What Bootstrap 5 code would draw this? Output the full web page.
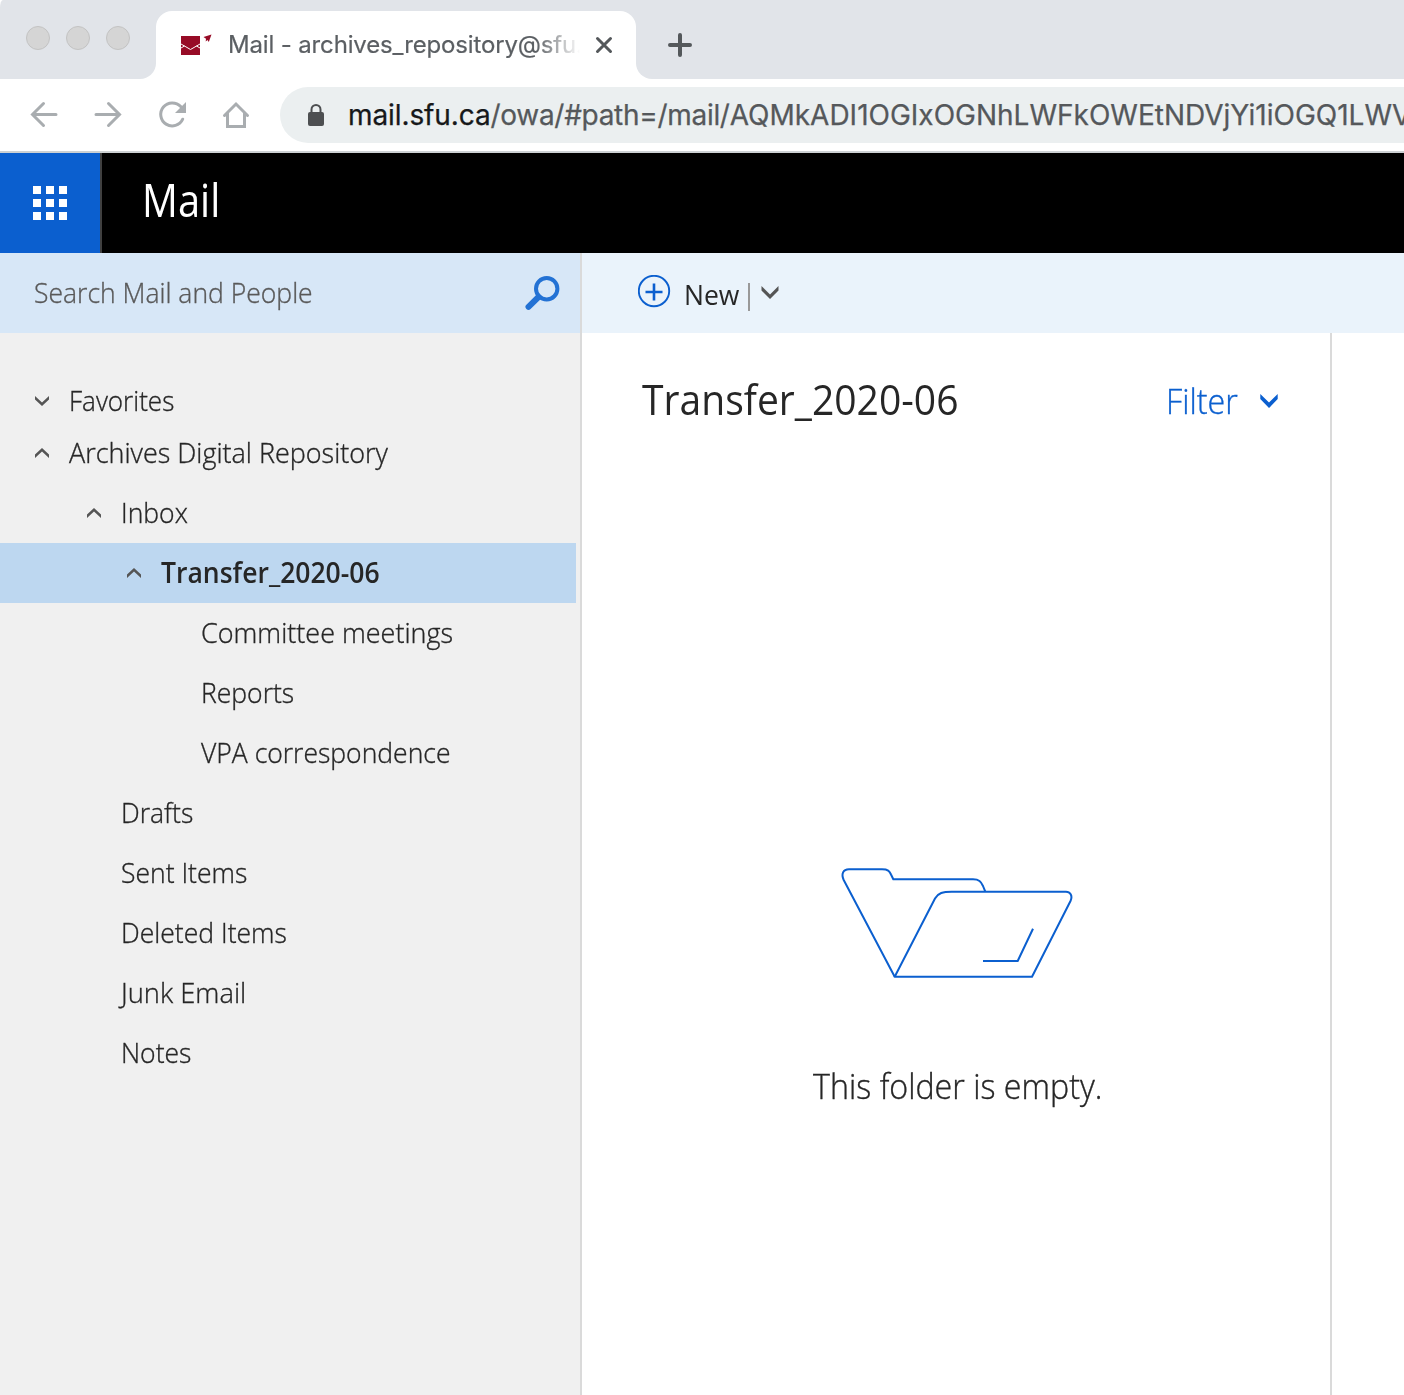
<!DOCTYPE html>
<html lang="en">
<head>
<meta charset="utf-8">
<meta name="viewport" content="width=device-width, initial-scale=1">
<title>Mail - archives_repository@sfu.ca</title>
<link href="https://cdn.jsdelivr.net/npm/bootstrap@5.3.0/dist/css/bootstrap.min.css" rel="stylesheet">
<style>
  body { font-family: "Open Sans", "Noto Sans", sans-serif; color: #262626; background: #fff; overflow: hidden; }
  svg { display: block; flex: none; }
  .browser { font-family: Inter, Roboto, sans-serif; }
  .tab-strip { height: 79px; background: #fff; }
  .strip-left { width: 156px; background: #e1e4e9; border-radius: 3px 0 16px 0 / 8px 0 16px 0; padding: 26px 0 0 26px; gap: 16px; }
  .strip-mid { width: 480px; background: #e1e4e9; padding-top: 11px; }
  .strip-right { background: #e1e4e9; border-bottom-left-radius: 16px; padding: 10px 0 0 30px; }
  .light { width: 24px; height: 24px; border-radius: 50%; background: #d5d5d5; border: 1px solid #c3c3c3; }
  .tab-page { height: 68px; background: #fff; border-radius: 16px 16px 0 0; padding-left: 24px; }
  .tab-title { width: 352px; margin: 0 15px; font-size: 24px; line-height: 34px; letter-spacing: -.15px; color: #5b5f63;
    -webkit-text-stroke: .2px currentColor;
    -webkit-mask-image: linear-gradient(90deg, #000 308px, transparent 352px); mask-image: linear-gradient(90deg, #000 308px, transparent 352px); }
  .nav-row { height: 74px; border-bottom: 2px solid #cdd1d3; padding-left: 26px; gap: 28px; }
  .address { height: 56px; margin-left: -2px; border-radius: 28px 0 0 28px; background: #ebeff0; padding-left: 24px; font-size: 28px; color: #55585b; overflow: hidden; -webkit-text-stroke: .25px currentColor; }
  .address strong { font-weight: 400; color: #16181a; letter-spacing: -.1px; }
  .url-dir { letter-spacing: -.3px; }
  .suite { height: 100px; background: #000; }
  .launcher { width: 102px; background: #0b5fcf; border-right: 2px solid #404040; padding-left: 33px; }
  .suite-name { font-size: 45px; line-height: 60px; color: #fff; margin: -6px 0 0 40px; }
  .side { width: 582px; background: #f0f0f0; border-right: 2px solid #dadada; }
  .search { height: 80px; background: #d7e7f7; padding: 0 20px 0 34px; font-size: 28px; font-weight: 300; color: #595959; }
  .folders { padding-top: 42px; font-size: 28px; font-weight: 300; }
  .folders .item { height: 60px; width: 576px; }
  .folders .item svg { margin-right: 20px; }
  .folders .top { height: 52px; padding-left: 34px; }
  .l1 { padding-left: 86px; } .l1x { padding-left: 121px; }
  .l2 { padding-left: 126px; } .l3 { padding-left: 201px; }
  /* narrow humanist lettering, slightly heavier than the light cut */
  .label { display: inline-block; transform: scaleX(.947); transform-origin: 0 50%; }
  .folders .label, .search .label { margin-top: -2px; }
  .semi { -webkit-text-stroke: .35px currentColor; }
  .w-a { transform: scaleX(.887); } .w-b { transform: scaleX(.93); } .w-c { transform: scaleX(.963); } .w-d { transform: scaleX(.975); }
  .folders .chosen { background: #bdd7f0; font-weight: 600; }
  .commands { height: 80px; background: #eaf3fb; padding-left: 56px; font-size: 28px; }
  .new-label { margin-left: 13px; padding-top: 2px; }
  .bar { width: 2px; height: 28px; background: #999; margin: 8px 11px 0 5px; }
  .list-pane { width: 750px; border-right: 2px solid #dadada; }
  .list-head { padding: 34px 52px 0 60px; height: 100px; }
  .list-title { font-size: 42px; line-height: 64px; }
  .filter { font-size: 34px; font-weight: 300; color: #0b5fcf; gap: 22px; line-height: 64px; margin-top: 2px; }
  .filter .label { transform-origin: 100% 50%; }
  .empty { padding-top: 434px; }
  .empty-text { font-size: 34px; font-weight: 300; line-height: 50px; margin-top: 82px; padding-left: 3px; }
  .empty-text .label { transform-origin: 50% 50%; }
</style>
</head>
<body>
<div class="vh-100 d-flex flex-column">
  <header class="browser">
    <div class="tab-strip d-flex">
      <div class="strip-left d-flex"><span class="light"></span><span class="light"></span><span class="light"></span></div>
      <div class="strip-mid">
        <div class="tab-page d-flex align-items-center">
          <svg width="33" height="24" viewBox="180 33 33 24"><path fill="#970b26" d="M181 36h19v19h-19zM203.500 37l8-2.500-2.700 7.500-1.300-2-1.800 1.500.3-2.800z"/><path fill="none" stroke="#fff" stroke-width="1" d="M181 44l9.500 5.500 9.500-5.500M181 48l3.500-2M200 48l-3.500-2"/></svg>
          <div class="tab-title text-nowrap">Mail - archives_repository@sfu.</div>
          <svg width="18" height="18" viewBox="595 36 18 18"><path stroke="#54585b" stroke-width="3" stroke-linecap="round" d="M597.500 38.500l13 13m0-13l-13 13"/></svg>
        </div>
      </div>
      <div class="strip-right flex-grow-1 d-flex align-items-center"><svg width="28" height="28" viewBox="666 31 28 28"><path stroke="#54585b" stroke-width="4" stroke-linecap="round" d="M670 45h20M680 35v20"/></svg></div>
    </div>
    <div class="nav-row d-flex align-items-center">
      <svg width="36" height="36" viewBox="26 97 36 36" fill="none" stroke="#a9adb0" stroke-width="3" stroke-linecap="round"><path d="M56 114.500H33M43.500 103.500l-11 11 11 11"/></svg>
      <svg width="36" height="36" viewBox="90 97 36 36" fill="none" stroke="#a9adb0" stroke-width="3" stroke-linecap="round"><path d="M96 114.500h23M108.500 103.500l11 11-11 11"/></svg>
      <svg width="36" height="36" viewBox="154 97 36 36"><path fill="none" stroke="#a9adb0" stroke-width="3" stroke-linecap="round" d="M182.700 119.200a11.500 11.500 0 1 1-2-12.600"/><path fill="#a9adb0" d="M186 102v11h-11z"/></svg>
      <svg width="36" height="36" viewBox="218 97 36 36" fill="none" stroke="#a9adb0" stroke-width="3" stroke-linecap="round"><path d="M227.500 113.500v13h17v-13M224.500 115.500L236 104l11.500 11.500"/></svg>
      <div class="address flex-grow-1 d-flex align-items-center text-nowrap">
        <svg width="24" height="28" viewBox="304 101 24 28"><rect x="308" y="112" width="16" height="14" rx="2" fill="#4d4f51"/><path fill="none" stroke="#4d4f51" stroke-width="2" d="M311.500 113v-3.500a4.500 4.500 0 0 1 9 0v3.500"/></svg>
        <div class="ps-3 ms-1"><strong>mail.sfu.ca</strong><span class="url-dir">/owa/#path=/mail/</span><span>AQMkADI1OGIxOGNhLWFkOWEtNDVjYi1iOGQ1LWV</span></div>
      </div>
    </div>
  </header>
  <div class="suite d-flex align-items-center">
    <div class="launcher h-100 d-flex align-items-center">
      <svg width="34" height="34" fill="#fff"><path d="M0 0h8v8H0zM13 0h8v8h-8zM26 0h8v8h-8zM0 13h8v8H0zM13 13h8v8h-8zM26 13h8v8h-8zM0 26h8v8H0zM13 26h8v8h-8zM26 26h8v8h-8z"/></svg>
    </div>
    <div class="suite-name"><span class="label w-a">Mail</span></div>
  </div>
  <div class="d-flex flex-grow-1">
    <aside class="side flex-shrink-0">
      <div class="search d-flex align-items-center justify-content-between">
        <span class="label semi">Search Mail and People</span>
        <svg width="36" height="36" viewBox="524 275 36 36" fill="none" stroke="#2372d4"><circle cx="546.700" cy="288.700" r="10.700" stroke-width="4"/><path stroke-width="6" stroke-linecap="round" d="M538.500 297l-10 9.800"/></svg>
      </div>
      <nav class="folders">
        <div class="item top d-flex align-items-center"><svg width="15" height="12" fill="#555"><path d="M1 1l7 6.500L15 1v3.500L8 11 1 4.500z"/></svg><span class="label semi w-b">Favorites</span></div>
        <div class="item top d-flex align-items-center mb-1"><svg width="15" height="12" fill="#555"><path d="M1 11l7-6.500L15 11V7.500L8 1 1 7.500z"/></svg><span class="label semi w-c">Archives Digital Repository</span></div>
        <div class="item l1 d-flex align-items-center"><svg width="15" height="12" fill="#555"><path d="M1 11l7-6.500L15 11V7.500L8 1 1 7.500z"/></svg><span class="label semi">Inbox</span></div>
        <div class="item l2 chosen d-flex align-items-center"><svg width="15" height="12" fill="#555"><path d="M1 11l7-6.500L15 11V7.500L8 1 1 7.500z"/></svg><span class="label">Transfer_2020-06</span></div>
        <div class="item l3 d-flex align-items-center"><span class="label semi w-c">Committee meetings</span></div>
        <div class="item l3 d-flex align-items-center"><span class="label semi">Reports</span></div>
        <div class="item l3 d-flex align-items-center"><span class="label semi">VPA correspondence</span></div>
        <div class="item l1x d-flex align-items-center"><span class="label semi">Drafts</span></div>
        <div class="item l1x d-flex align-items-center"><span class="label semi">Sent Items</span></div>
        <div class="item l1x d-flex align-items-center"><span class="label semi">Deleted Items</span></div>
        <div class="item l1x d-flex align-items-center"><span class="label semi w-d">Junk Email</span></div>
        <div class="item l1x d-flex align-items-center"><span class="label semi">Notes</span></div>
      </nav>
    </aside>
    <main class="flex-grow-1 d-flex flex-column">
      <div class="commands d-flex align-items-center">
        <svg width="33" height="36" viewBox="638 275 33 36" fill="none" stroke="#0b5fcf"><circle cx="654" cy="291" r="15.200" stroke-width="1.900"/><path stroke-width="2.600" d="M645.500 292h17M654 283.500v17"/></svg>
        <span class="new-label"><span class="label">New</span></span><span class="bar"></span>
        <svg width="18" height="14" fill="#555"><path d="M.5 0L9 8.500 17.500 0v4.500L9 13 .5 4.500z"/></svg>
      </div>
      <div class="list-pane flex-grow-1">
        <div class="list-head d-flex justify-content-between align-items-start">
          <div class="list-title"><span class="label w-b">Transfer_2020-06</span></div>
          <div class="filter d-flex align-items-center"><span class="label semi">Filter</span><svg width="18" height="15" fill="#0b5fcf"><path d="M.3 0L9 8.500 17.700 0v5L9 14 .3 5z"/></svg></div>
        </div>
        <div class="empty d-flex flex-column align-items-center">
          <svg width="234" height="112" viewBox="839 867 234 112" fill="none" stroke="#0b5fcf" stroke-width="2" stroke-linejoin="round"><path d="M894.700 976.700L843.700 880C841 874 843 869.300 849 869.300H882C888 869.300 889.500 871 891 874.500L893.300 879.300H973C979 879.300 981 881.500 983 886L985.300 891.700"/><path d="M894.700 976.700L935 898.500C938 893 943 891.700 951.700 891.700H1066C1070 891.700 1073 895.500 1070.500 901L1032 976.700z"/><path d="M983 961h34.700L1033 928.700"/></svg>
          <div class="empty-text"><span class="label semi">This folder is empty.</span></div>
        </div>
      </div>
    </main>
  </div>
</div>
<script src="https://cdn.jsdelivr.net/npm/bootstrap@5.3.0/dist/js/bootstrap.bundle.min.js"></script>
</body>
</html>
